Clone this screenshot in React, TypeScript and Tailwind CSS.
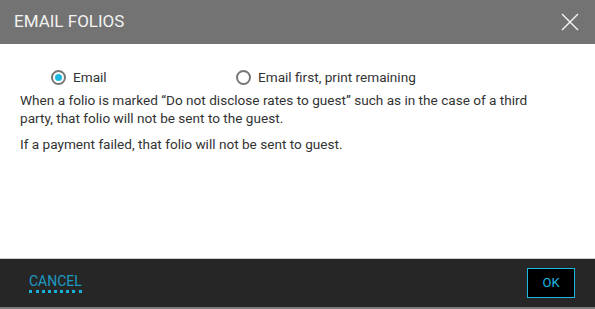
import React, { useState } from "react";

function Radio({ checked, label, onClick }: { checked: boolean; label: string; onClick: () => void }) {
  return (
    <button type="button" onClick={onClick} className="flex items-center gap-[7px] text-[13.6px] text-[#333]">
      <span className="flex h-[15px] w-[15px] items-center justify-center rounded-full border-2 border-[#777] bg-white">
        {checked && <span className="h-[7px] w-[7px] rounded-full bg-[#1cb8e0]" />}
      </span>
      {label}
    </button>
  );
}

export default function App() {
  const [mode, setMode] = useState<"email" | "print">("email");

  return (
    <div className="flex h-[309px] w-[595px] flex-col bg-white" style={{ fontFamily: "Roboto, 'Noto Sans', sans-serif" }}>
      {/* Header */}
      <div className="flex h-[44px] items-center justify-between bg-[#737373] pl-[14px] pr-[15px]">
        <span className="text-[17px] text-[#f2f2f2]">EMAIL FOLIOS</span>
        <button type="button" aria-label="Close" className="flex h-[20px] w-[20px] items-center justify-center">
          <svg width="18" height="18" viewBox="0 0 18 18" fill="none" stroke="#f5f5f5" strokeWidth="1.4">
            <path d="M1 1L17 17M17 1L1 17" />
          </svg>
        </button>
      </div>

      {/* Body */}
      <div className="flex-1 pl-[20px] pr-[45px] pt-[23px]">
        <div className="flex pl-[31px]">
          <div className="w-[185px] shrink-0">
            <Radio checked={mode === "email"} label="Email" onClick={() => setMode("email")} />
          </div>
          <Radio checked={mode === "print"} label="Email first, print remaining" onClick={() => setMode("print")} />
        </div>
        <p className="mt-[4px] text-[13.6px] leading-[18px] text-[#333]">
          When a folio is marked “Do not disclose rates to guest” such as in the case of a third party, that folio will not be sent to the guest.
        </p>
        <p className="mt-[8px] text-[13.6px] leading-[18px] text-[#333]">
          If a payment failed, that folio will not be sent to guest.
        </p>
      </div>

      {/* Footer */}
      <div className="border-t border-[#cfcfcf] border-b-2 border-b-[#7a7a7a]">
        <div className="flex h-[48px] items-center justify-between bg-[#262626] pl-[29px] pr-[20px]">
          <button type="button" className="border-b-[3px] border-dotted border-[#1ab0da] pb-[1px] text-[14px] leading-[16px] text-[#1a9bc4]">
            CANCEL
          </button>
          <button type="button" className="flex h-[30px] w-[48px] items-center justify-center border border-[#1cb8e0] bg-black text-[13px] text-[#1cb8e0]">
            OK
          </button>
        </div>
      </div>
    </div>
  );
}
